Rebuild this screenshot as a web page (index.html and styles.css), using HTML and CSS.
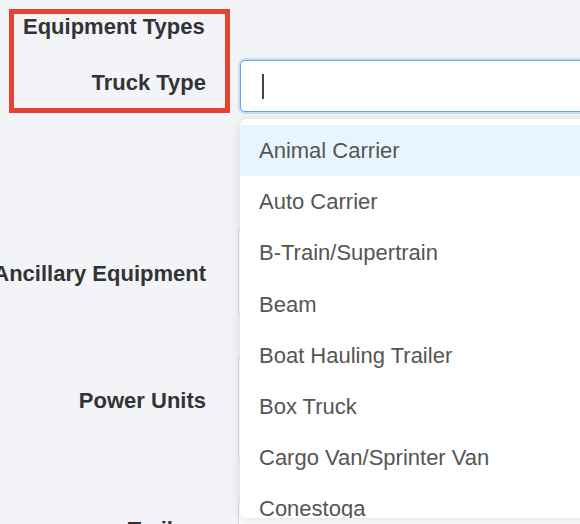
FILE: index.html
```html
<!DOCTYPE html>
<html lang="en">
<head>
    <meta charset="UTF-8">
    <meta name="viewport" content="width=device-width, initial-scale=1.0">
    <title>Equipment Types</title>
    <link rel="stylesheet" href="styles.css">
</head>
<body>

    <div class="page">
        <div class="form">
            <h2 class="form-title">Equipment Types</h2>

            <!-- Truck type: open select -->
            <div class="form-row row-truck">
                <label class="form-label">Truck Type</label>
                <div class="field">
                    <div class="select-box is-focused"><span class="caret"></span></div>
                    <ul class="dropdown">
                        <li class="is-active">Animal Carrier</li>
                        <li>Auto Carrier</li>
                        <li>B-Train/Supertrain</li>
                        <li>Beam</li>
                        <li>Boat Hauling Trailer</li>
                        <li>Box Truck</li>
                        <li>Cargo Van/Sprinter Van</li>
                        <li>Conestoga</li>
                    </ul>
                </div>
            </div>

            <div class="form-row row-ancillary">
                <label class="form-label">Ancillary Equipment</label>
                <div class="field"><div class="select-box"></div></div>
            </div>

            <div class="form-row row-power">
                <label class="form-label">Power Units</label>
                <div class="field"><div class="select-box"></div></div>
            </div>

            <div class="form-row row-trailers">
                <label class="form-label">Trailers</label>
                <div class="field"><div class="select-box"></div></div>
            </div>
        </div>

        <!-- annotation -->
        <div class="highlight-box"></div>
    </div>

</body>
</html>
```

FILE: styles.css
```css
html, body {
    margin: 0;
    overflow: hidden;
}

body {
    font-family: "Liberation Sans", Arial, sans-serif;
    background-color: #f3f4f8;
    color: #333;
}

.page {
    position: relative;
    height: 524px;
}

.form {
    padding-top: 14px;
    display: flex;
    flex-direction: column;
    gap: 38px;
}

.form-title {
    margin: 0 0 -18px 23px;
    font-size: 22px;
    line-height: 26px;
    font-weight: bold;
    color: #333;
}

.form-row {
    display: grid;
    grid-template-columns: 206px 560px;
    column-gap: 32px;
}

.form-label {
    display: flex;
    justify-content: flex-end;
    white-space: nowrap;
    font-size: 22px;
    line-height: 26px;
    font-weight: bold;
    color: #333;
    padding-top: 34px;
}

.field {
    position: relative;
}

.select-box {
    box-sizing: border-box;
    height: 100%;
    background-color: white;
    border: 1px solid #d8dade;
    border-radius: 5px;
}

.row-truck {
    height: 52px;
    margin-bottom: 77px;
}

.row-truck .form-label {
    padding-top: 10px;
}

.row-ancillary {
    height: 90px;
}

.row-power {
    height: 108px;
}

.row-power .form-label {
    padding-top: 33px;
}

.row-trailers {
    height: 60px;
}

.row-trailers .form-label {
    padding-top: 16px;
}

.select-box.is-focused {
    margin-left: 2px;
    display: flex;
    align-items: center;
    padding-left: 21px;
    border-color: #62a4f0;
    box-shadow: 0 0 0 2px rgba(98, 164, 240, 0.28);
}

.caret {
    display: inline-block;
    width: 2px;
    height: 25px;
    background-color: #444;
}

.dropdown {
    position: absolute;
    top: 59px;
    left: 2px;
    width: 520px;
    height: 393px;
    margin: 0;
    padding: 6px 0 0 0;
    list-style-type: none;
    overflow: hidden;
    background-color: white;
    border-radius: 6px;
    box-shadow: 0 2px 12px rgba(0, 0, 0, 0.12);
    z-index: 2;
}

.dropdown li {
    padding: 13px 19px;
    font-size: 22px;
    line-height: 25.2px;
    color: #555;
    white-space: nowrap;
}

    .dropdown li.is-active {
        background-color: #e9f5fe;
    }

.highlight-box {
    position: absolute;
    left: 9px;
    top: 9px;
    width: 221px;
    height: 104px;
    box-sizing: border-box;
    border: 5px solid #e6432e;
    z-index: 3;
}
```
